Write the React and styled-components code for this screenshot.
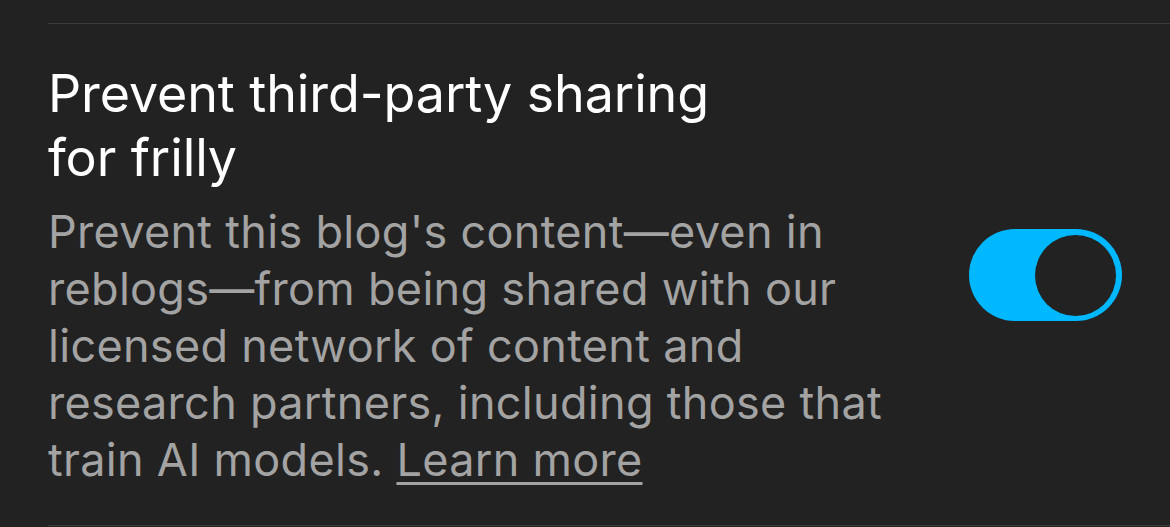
import React, { useState } from "react";
import styled, { createGlobalStyle } from "styled-components";

const Global = createGlobalStyle`
  html, body { margin: 0; padding: 0; background: #222222; }
  body { font-family: Inter, "Noto Sans", sans-serif; -webkit-font-smoothing: antialiased; }
`;

const Page = styled.div`
  width: 1170px;
  height: 527px;
  background: #222222;
  padding-top: 23px;
  box-sizing: border-box;
  overflow: hidden;
`;

const Section = styled.section`
  margin-left: 48px;
  border-top: 1px solid #3b3b3b;
  border-bottom: 1px solid #3b3b3b;
`;

const Row = styled.div`
  display: flex;
  align-items: center;
  justify-content: space-between;
  padding: 38px 48px 37px 0;
`;

const TextCol = styled.div`
  width: 865px;
  display: flex;
  flex-direction: column;
  gap: 13px;
`;

const Title = styled.h2`
  margin: 0;
  max-width: 730px;
  font-size: 52px;
  line-height: 64px;
  font-weight: 400;
  color: #ffffff;
  letter-spacing: -0.1px;
`;

const Description = styled.p`
  margin: 0;
  font-size: 45px;
  line-height: 57px;
  font-weight: 400;
  color: #a3a3a3;
  letter-spacing: 0.3px;
`;

const Link = styled.a`
  color: #a3a3a3;
  text-decoration: underline;
  text-decoration-thickness: 3px;
  text-underline-offset: 6px;
  cursor: pointer;
`;

const Track = styled.button`
  flex: none;
  width: 153px;
  height: 92px;
  border: none;
  border-radius: 46px;
  padding: 6px;
  background: ${(p) => (p.$on ? "#00b8ff" : "#555")};
  display: flex;
  justify-content: ${(p) => (p.$on ? "flex-end" : "flex-start")};
  align-items: center;
  cursor: pointer;
  box-sizing: border-box;
`;

const Knob = styled.span`
  width: 81px;
  height: 81px;
  border-radius: 50%;
  background: #222222;
`;

export default function App() {
  const [on, setOn] = useState(true);
  return (
    <Page>
      <Global />
      <Section>
        <Row>
          <TextCol>
            <Title>Prevent third-party sharing for frilly</Title>
            <Description>
              Prevent this blog's content—even in reblogs—from being shared with our
              licensed network of content and research partners, including those that
              train AI models. <Link>Learn more</Link>
            </Description>
          </TextCol>
          <Track $on={on} onClick={() => setOn(!on)} aria-pressed={on}>
            <Knob />
          </Track>
        </Row>
      </Section>
    </Page>
  );
}
